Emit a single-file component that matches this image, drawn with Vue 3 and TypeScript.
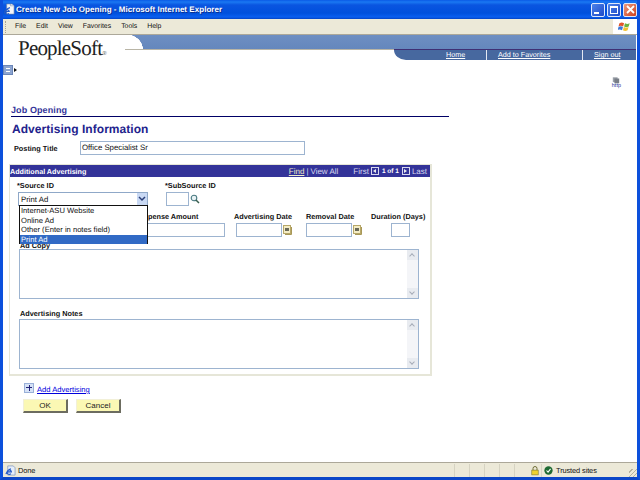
<script setup lang="ts">
const menus = ['File', 'Edit', 'View', 'Favorites', 'Tools', 'Help']
const sourceOptions = ['Internet-ASU Website', 'Online Ad', 'Other (Enter in notes field)', 'Print Ad']
const selected = 'Print Ad'
</script>

<template>
  <div class="window">
    <div class="titlebar">
      <svg class="title-icon" viewBox="0 0 13 14" width="12" height="13">
        <path d="M4 1h6l2 2v9H4z" fill="#f4f6fa" stroke="#6f86a8" stroke-width="0.700" />
        <path d="M8 1v2h3" fill="none" stroke="#6f86a8" stroke-width="0.600" />
        <path d="M2.200 9.200h4.600a2.500 2.500 0 1 0-.5 2M1 11.500c1-3 3-5.500 6.500-6.500" fill="none" stroke="#2058c8" stroke-width="1.200" />
      </svg>
      <span class="title-text">Create New Job Opening - Microsoft Internet Explorer</span>
      <div class="win-buttons">
        <span class="win-btn"><i class="min-glyph"></i></span>
        <span class="win-btn"><i class="max-glyph"></i></span>
        <span class="win-btn close">
          <svg viewBox="0 0 9 9" width="9" height="9"><path d="M1 1l7 7M8 1l-7 7" stroke="#fff" stroke-width="1.800" /></svg>
        </span>
      </div>
    </div>

    <div class="menubar">
      <span class="grip"></span>
      <span v-for="m in menus" :key="m" class="menu-item">{{ m }}</span>
      <span class="xp-flag">
        <svg viewBox="0 0 14 14" width="14" height="13">
          <path d="M1 3.500c2-1 3-1 5 0l-1 3.500c-2-1-3-1-5 0z" fill="#e2552b" />
          <path d="M7 3.500c2 1 3 1 5 0l-1 3.500c-2 1-3 1-5 0z" fill="#6cb33f" />
          <path d="M0 7.500c2-1 3-1 4.800 0l-1 3.500c-2-1-3-1-4.800 0z" fill="#3b78d8" />
          <path d="M5.800 7.500c2 1 3 1 5 0l-1 3.500c-2 1-3 1-5 0z" fill="#f2c230" />
        </svg>
      </span>
    </div>

    <div class="page">
      <header class="banner">
        <div class="logo">PeopleSoft<small>®</small></div>
        <div class="banner-right">
          <div class="band"></div>
          <nav class="links">
            <a class="home">Home</a>
            <a class="fav">Add to Favorites</a>
            <a class="out">Sign out</a>
          </nav>
        </div>
      </header>

      <div class="tool-row">
        <span class="nav-toggle"><i></i></span>
        <span class="nav-arrow"></span>
        <div class="http-icon">
          <svg viewBox="0 0 10 8" width="8" height="7">
            <rect x="1" y="0" width="6" height="6" fill="#9aa0a8" />
            <rect x="3" y="1.500" width="6" height="6" fill="#777d86" />
          </svg>
          <span>http</span>
        </div>
      </div>

      <div class="content">
        <div class="crumb">Job Opening</div>
        <h1 class="heading">Advertising Information</h1>
        <div class="posting-row">
          <label>Posting Title</label>
          <div class="input posting-input">Office Specialist Sr</div>
        </div>

        <section class="panel">
          <div class="panel-head">
            <span class="panel-title">Additional Advertising</span>
            <span class="panel-nav">
              <a class="find">Find</a>
              <span class="sep">|</span>
              <span>View All</span>
              <span class="first">First</span>
              <span class="pager"><i class="left"></i></span>
              <b>1 of 1</b>
              <span class="pager"><i class="right"></i></span>
              <span>Last</span>
            </span>
          </div>

          <div class="panel-body">
            <div class="source-row">
              <div class="field source-field">
                <label>*Source ID</label>
                <div class="select">
                  <span>Print Ad</span>
                  <span class="select-btn">
                    <svg viewBox="0 0 8 6" width="8" height="6"><path d="M1 1l3 3 3-3" fill="none" stroke="#2a3f78" stroke-width="1.500" /></svg>
                  </span>
                </div>
                <ul class="dropdown">
                  <li v-for="o in sourceOptions" :key="o" :class="{ active: o === selected }">{{ o }}</li>
                </ul>
              </div>
              <div class="field">
                <label>*SubSource ID</label>
                <div class="with-icon">
                  <div class="input sub-input"></div>
                  <svg viewBox="0 0 10 10" width="10" height="10">
                    <circle cx="4" cy="4" r="2.800" fill="#e8f2f4" stroke="#4a7a80" stroke-width="1.100" />
                    <path d="M6 6l3 3" stroke="#3a5f50" stroke-width="1.500" />
                  </svg>
                </div>
              </div>
            </div>

            <div class="detail-row">
              <div class="field expense">
                <label>Expense Amount</label>
                <div class="input expense-input"></div>
              </div>
              <div class="field date-field">
                <label>Advertising Date</label>
                <div class="with-icon">
                  <div class="input date-input"></div>
                  <svg class="cal" viewBox="0 0 9 10" width="9" height="10">
                    <rect x="0.500" y="0.500" width="7" height="8" fill="#f4ecc4" stroke="#b8a868" />
                    <rect x="2" y="3" width="4" height="3" fill="#6a6a58" />
                    <path d="M8.500 2v7.500H2" fill="none" stroke="#a89858" />
                  </svg>
                </div>
              </div>
              <div class="field date-field removal">
                <label>Removal Date</label>
                <div class="with-icon">
                  <div class="input date-input"></div>
                  <svg class="cal" viewBox="0 0 9 10" width="9" height="10">
                    <rect x="0.500" y="0.500" width="7" height="8" fill="#f4ecc4" stroke="#b8a868" />
                    <rect x="2" y="3" width="4" height="3" fill="#6a6a58" />
                    <path d="M8.500 2v7.500H2" fill="none" stroke="#a89858" />
                  </svg>
                </div>
              </div>
              <div class="field duration">
                <label>Duration (Days)</label>
                <div class="input duration-input"></div>
              </div>
            </div>

            <div class="area-field ad-copy">
              <label>Ad Copy</label>
              <div class="textarea">
                <div class="scroll">
                  <span class="up"></span>
                  <span class="down"></span>
                </div>
              </div>
            </div>

            <div class="area-field notes">
              <label>Advertising Notes</label>
              <div class="textarea">
                <div class="scroll">
                  <span class="up"></span>
                  <span class="down"></span>
                </div>
              </div>
            </div>
          </div>
        </section>

        <div class="add-row">
          <span class="plus"></span>
          <a>Add Advertising</a>
        </div>
        <div class="actions">
          <button>OK</button>
          <button>Cancel</button>
        </div>
      </div>
    </div>

    <div class="statusbar">
      <svg viewBox="0 0 12 12" width="11" height="11">
        <path d="M3 1h6l2 2v8H3z" fill="#e6eef8" stroke="#6f8ab8" stroke-width="0.700" />
        <path d="M2 7.500h5a2.400 2.400 0 1 0-.6 2M1 10c1-3 2.500-5 5.500-6" fill="none" stroke="#2058c8" stroke-width="1.200" />
      </svg>
      <span class="status-text">Done</span>
      <span class="cells">
        <i></i><i></i><i></i><i></i><i></i>
      </span>
      <svg class="lock" viewBox="0 0 10 12" width="8" height="11">
        <path d="M2.500 6V3.500a2.500 2.500 0 0 1 5 0V6" fill="none" stroke="#6a6a30" stroke-width="1.200" />
        <rect x="1" y="5.500" width="8" height="6" fill="#efd22f" stroke="#7a7020" stroke-width="0.700" />
      </svg>
      <span class="cell-sep"></span>
      <svg class="trust" viewBox="0 0 10 10" width="9" height="9">
        <circle cx="5" cy="5" r="4.600" fill="#1f6b33" />
        <path d="M2.800 5l1.700 1.800 2.800-3.600" fill="none" stroke="#fff" stroke-width="1.200" />
      </svg>
      <span class="status-text trusted">Trusted sites</span>
      <span class="resize-grip"></span>
    </div>
  </div>
</template>

<style scoped>
.window {
  width: 640px;
  height: 480px;
  box-sizing: border-box;
  display: flex;
  flex-direction: column;
  overflow: hidden;
  font-family: "Liberation Sans", Arial, sans-serif;
  font-size: 8px;
  text-rendering: geometricPrecision;
  color: #111;
  background: #0a4ad8;
  border-left: 3px solid #0c50dc;
  border-right: 3px solid #0c50dc;
  border-bottom: 3px solid #0c47c8;
}

.titlebar {
  height: 19px;
  margin: 0 -3px;
  padding: 0 3px 0 3px;
  flex: none;
  display: flex;
  align-items: center;
  gap: 1px;
  background: linear-gradient(#0a5ae6 0, #1a78f2 2px, #0a55e0 5px, #0050dc 13px, #0a5ff0 17px, #0444c4 19px);
}

.title-text {
  color: #fff;
  font-size: 8px;
  font-weight: bold;
  letter-spacing: 0.04px;
  text-shadow: 1px 1px #0a2f90;
}

.win-buttons {
  margin-left: auto;
  display: flex;
  gap: 2px;
}

.win-btn {
  width: 12px;
  height: 12px;
  border: 1px solid #dfe8fb;
  border-radius: 2px;
  background: linear-gradient(135deg, #4d83ea, #1d49c8);
  display: flex;
  align-items: center;
  justify-content: center;
  position: relative;
}

.win-btn.close {
  background: linear-gradient(135deg, #ec9a80, #d0401c);
}

.min-glyph {
  width: 5px;
  height: 2px;
  background: #fff;
  margin: 6px 4px 0 0;
}

.max-glyph {
  width: 6px;
  height: 5px;
  border: 1px solid #fff;
  border-top-width: 2px;
}

.menubar {
  height: 16px;
  flex: none;
  display: flex;
  align-items: center;
  background: #ece9d8;
  border-bottom: 1px solid #aca899;
  box-sizing: border-box;
  padding-left: 2px;
}

.grip {
  width: 2px;
  height: 12px;
  margin-right: 7px;
  border-left: 1px dotted #a8a595;
}

.menu-item {
  margin-right: 10px;
  font-size: 6.900px;
}

.xp-flag {
  margin-left: auto;
  width: 24px;
  height: 15px;
  background: #fff;
  display: flex;
  align-items: center;
  justify-content: center;
}

.page {
  flex: 1;
  min-height: 0;
  background: #fff;
  overflow: hidden;
}

.banner {
  height: 26px;
  display: flex;
}

.logo {
  width: 122px;
  flex: none;
  padding: 1px 0 0 15px;
  box-sizing: border-box;
  font-family: "Liberation Serif", serif;
  font-size: 21px;
  letter-spacing: -0.8px;
  line-height: 24px;
  color: #222;
  white-space: nowrap;
}

.logo small {
  font-size: 6px;
  letter-spacing: 0;
  color: #666;
}

.banner-right {
  flex: 1;
  position: relative;
  display: flex;
  flex-direction: column;
  margin-right: 1px;
}

.band {
  height: 16px;
  background:
    radial-gradient(ellipse 18px 15px at 0 100%, #fff 98%, transparent 100%),
    linear-gradient(#6e8fc2, #6587bd);
  border-bottom: 1px solid #b9b5a6;
  box-sizing: border-box;
}

.links {
  height: 11px;
  margin-left: 269px;
  background: #47689f;
  border-top: 1px solid #3f2f74;
  border-bottom-left-radius: 12px 10px;
  box-sizing: border-box;
  display: flex;
  color: #fff;
  font-size: 7.200px;
  line-height: 10px;
  position: relative;
  top: -1px;
}

.links a {
  text-decoration: underline;
  white-space: nowrap;
}

.links .home {
  margin-left: 52px;
  width: 40px;
}

.links .fav {
  width: 96px;
  padding-left: 11px;
  box-sizing: border-box;
  border-left: 1px solid #e4e8f2;
}

.links .out {
  padding-left: 11px;
  border-left: 1px solid #e4e8f2;
}

.tool-row {
  height: 44px;
  position: relative;
  display: flex;
  align-items: flex-start;
  padding-top: 4px;
  box-sizing: border-box;
}

.nav-toggle {
  width: 8px;
  height: 8px;
  background: #8ca4d0;
  border: 1px solid #6b86b8;
  display: flex;
  align-items: center;
  justify-content: center;
  margin-right: 1px;
}

.nav-toggle i {
  width: 4px;
  height: 2px;
  border-top: 1px solid #fff;
  border-bottom: 1px solid #fff;
}

.nav-arrow {
  margin-top: 3px;
  border-left: 3px solid #111;
  border-top: 2px solid transparent;
  border-bottom: 2px solid transparent;
}

.http-icon {
  margin-left: auto;
  margin-right: 16px;
  margin-top: 12px;
  display: flex;
  flex-direction: column;
  align-items: center;
  font-size: 5.500px;
  line-height: 5px;
  color: #2a3a9a;
}

.content {
  padding-left: 8px;
}

.crumb {
  width: 438px;
  height: 12px;
  box-sizing: border-box;
  border-bottom: 1px solid #000066;
  color: #333399;
  font-size: 9px;
  font-weight: bold;
  line-height: 11px;
  letter-spacing: 0.1px;
}

.heading {
  margin: 5px 0 0 1px;
  font-size: 12px;
  line-height: 14px;
  height: 14px;
  color: #22228c;
  font-weight: bold;
  letter-spacing: 0.05px;
}

.posting-row {
  margin-top: 4px;
  display: flex;
  align-items: center;
  height: 15px;
  padding-left: 3px;
}

label {
  font-weight: bold;
  font-size: 7.300px;
  line-height: 9px;
  display: block;
  white-space: nowrap;
  color: #111;
}

.posting-row label {
  width: 66px;
  padding-top: 1px;
}

.input {
  box-sizing: border-box;
  border: 1px solid #9db4d0;
  background: #fff;
  font-size: 7.800px;
  line-height: 12px;
  padding-left: 1px;
}

.posting-input {
  width: 225px;
  height: 14px;
}

.panel {
  margin: 9px 0 0 -2px;
  width: 423px;
  height: 212px;
  box-sizing: border-box;
  border: 1px solid #e6e6d8;
  border-right-width: 2px;
  border-bottom-width: 2px;
  border-left-width: 1px;
}

.panel-head {
  height: 12px;
  background: #333399;
  color: #fff;
  display: flex;
  align-items: center;
  justify-content: space-between;
  padding-right: 3px;
  font-size: 8px;
}

.panel-title {
  font-weight: bold;
  font-size: 7.200px;
}

.panel-nav {
  display: flex;
  align-items: center;
  color: #d8d8ee;
  white-space: nowrap;
}

.find {
  color: #f0ecc8;
  text-decoration: underline;
}

.sep {
  margin: 0 2px;
}

.first {
  margin-left: 15px;
  margin-right: 2px;
}

.pager {
  width: 8px;
  height: 8px;
  border: 1px solid #d8d8ee;
  box-sizing: border-box;
  display: inline-flex;
  align-items: center;
  justify-content: center;
}

.pager i {
  border-top: 2px solid transparent;
  border-bottom: 2px solid transparent;
}

.pager .left {
  border-right: 3px solid #eee;
}

.pager .right {
  border-left: 3px solid #eee;
}

.panel-nav b {
  font-size: 6.500px;
  margin: 0 3px;
  color: #fff;
}

.panel-nav .pager + span {
  margin-left: 2px;
}

.panel-body {
  padding: 4px 0 0 8px;
}

.source-row {
  display: flex;
  height: 31px;
}

.field label {
  margin-bottom: 2px;
}

.source-field {
  width: 148px;
  position: relative;
  z-index: 2;
}

.source-field label {
  margin-left: -1px;
}

.select {
  width: 130px;
  height: 14px;
  box-sizing: border-box;
  border: 1px solid #8fa8c8;
  background: #fff;
  display: flex;
  align-items: center;
  justify-content: space-between;
  padding-left: 2px;
  font-size: 7.800px;
}

.select-btn {
  width: 10px;
  height: 12px;
  background: #c9d9f4;
  display: flex;
  align-items: center;
  justify-content: center;
}

.dropdown {
  position: absolute;
  top: 24px;
  left: 1px;
  width: 129px;
  height: 39px;
  margin: 0;
  padding: 0;
  list-style: none;
  box-sizing: border-box;
  border: 1px solid #111;
  background: #fff;
  font-size: 7.600px;
  line-height: 9.500px;
}

.dropdown li {
  padding-left: 1px;
  white-space: nowrap;
}

.dropdown .active {
  background: #316ac5;
  color: #fff;
}

.with-icon {
  display: flex;
  align-items: center;
  gap: 1px;
}

.source-row .field:last-child {
  margin-left: -1px;
}

.sub-input {
  margin-left: 1px;
  width: 23px;
  height: 14px;
}

.detail-row {
  display: grid;
  grid-template-columns: 216px 72px 65px 55px;
  align-items: end;
  height: 21px;
}

.detail-row .field {
  min-width: 0;
}

.expense {
  padding-left: 121px;
}

.expense-input {
  width: 86px;
  height: 14px;
}

.date-input {
  width: 46px;
  height: 14px;
  margin-left: 2px;
}

.duration-input {
  width: 19px;
  height: 14px;
  margin-left: 20px;
}

.removal .date-input {
  margin-left: 0;
}

.area-field label {
  padding-left: 2px;
}

.ad-copy {
  margin-top: 10px;
}

.ad-copy label {
  height: 6px;
  line-height: 5px;
}

.notes {
  margin-top: 10px;
}

.notes label {
  margin-bottom: 1px;
}

.textarea {
  margin-left: 1px;
  width: 400px;
  height: 50px;
  box-sizing: border-box;
  border: 1px solid #9db4d0;
  display: flex;
  justify-content: flex-end;
  background: #fff;
}

.scroll {
  width: 11px;
  background: #f4f5f8;
  display: flex;
  flex-direction: column;
  justify-content: space-between;
}

.scroll span {
  height: 10px;
  background: #e8ebf0;
  position: relative;
  display: block;
}

.scroll span::after {
  content: "";
  position: absolute;
  left: 3px;
  width: 3px;
  height: 3px;
  border-left: 1px solid #a6acb8;
  border-top: 1px solid #a6acb8;
  transform: rotate(45deg);
  top: 4px;
}

.scroll .down::after {
  transform: rotate(225deg);
  top: 2px;
}

.add-row {
  margin: 6px 0 0 13px;
  display: flex;
  align-items: center;
  height: 11px;
  gap: 3px;
}

.plus {
  width: 10px;
  height: 10px;
  box-sizing: border-box;
  border: 1px solid #9ab0d8;
  background:
    linear-gradient(#23237a, #23237a) center / 6px 1px no-repeat,
    linear-gradient(#23237a, #23237a) center / 1px 6px no-repeat,
    #d6e2f6;
}

.add-row a {
  color: #0000dd;
  text-decoration: underline;
  font-size: 7.600px;
  padding-top: 4px;
}

.actions {
  margin: 6px 0 0 12px;
  display: flex;
  gap: 8px;
}

button {
  width: 45px;
  height: 14px;
  padding: 0;
  font-family: "Liberation Sans", Arial, sans-serif;
  font-size: 8px;
  color: #222;
  background: #fbf8b4;
  border: none;
  border-right: 2px solid #6c6c60;
  border-bottom: 2px solid #6c6c60;
  border-top: 1px solid #f2f0d8;
  border-left: 1px solid #f2f0d8;
}

.statusbar {
  height: 15px;
  flex: none;
  box-sizing: border-box;
  background: #ece9d8;
  border-top: 1px solid #aca899;
  display: flex;
  align-items: center;
  padding-left: 2px;
  gap: 2px;
}

.status-text {
  font-size: 7.400px;
  letter-spacing: -0.1px;
}

.cells {
  margin-left: auto;
  display: flex;
  height: 13px;
}

.cells i {
  width: 14px;
  border-left: 1px solid #d6d3c2;
}

.cell-sep {
  height: 13px;
  margin-left: 0;
  border-left: 1px solid #d6d3c2;
}

.trusted {
  width: 71px;
  margin-left: 1px;
}

.resize-grip {
  width: 8px;
  height: 8px;
  align-self: flex-end;
  background: repeating-linear-gradient(135deg, transparent 0 2px, #b5b2a0 2px 3px);
}
</style>

<style>
html, body { margin: 0; background: #fff; }
</style>
